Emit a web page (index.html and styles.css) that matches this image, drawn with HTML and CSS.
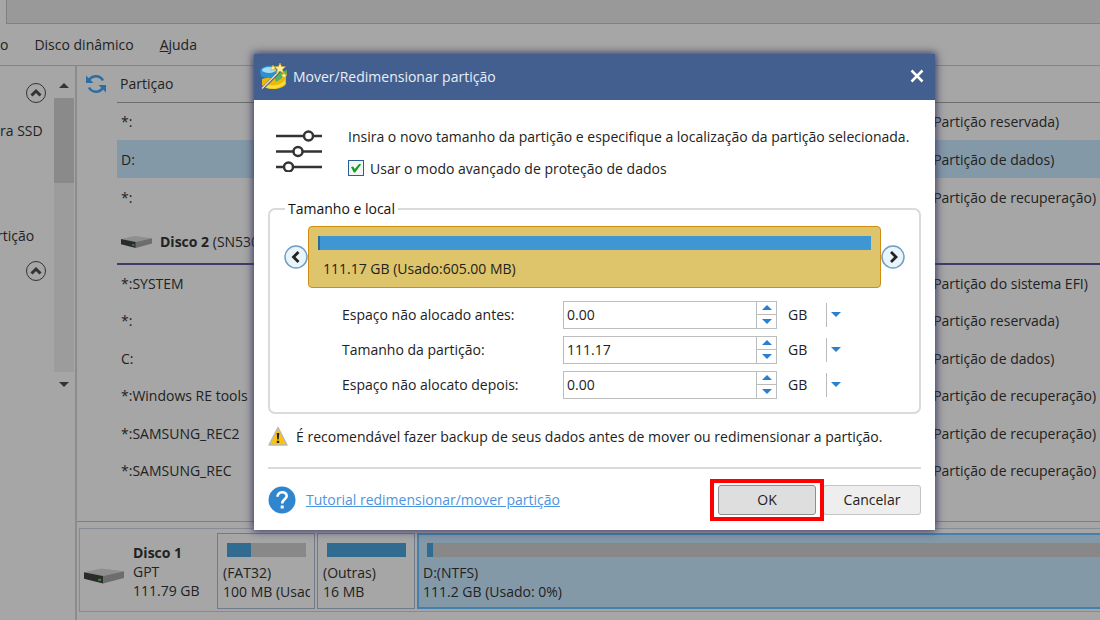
FILE: index.html
```html
<!DOCTYPE html>
<html lang="pt">
<head>
<meta charset="utf-8">
<title>Mover/Redimensionar partição</title>
<link rel="stylesheet" href="styles.css">
</head>
<body>
<div class="app">
  <div class="tabstrip"></div>
  <nav class="menubar">
    <span>o</span>
    <span>Disco dinâmico</span>
    <span><u>A</u>juda</span>
  </nav>
  <div class="workspace">
    <aside class="sidebar">
      <div class="actions">
        <button class="collapse" aria-label="Recolher"><svg viewBox="0 0 22 22"><circle cx="11" cy="11" r="9.5"/><path d="M6.5 13.5 11 9l4.5 4.5"/></svg></button>
        <p class="action first">ra SSD</p>
        <p class="action second">rtição</p>
        <button class="collapse" aria-label="Recolher"><svg viewBox="0 0 22 22"><circle cx="11" cy="11" r="9.5"/><path d="M6.5 13.5 11 9l4.5 4.5"/></svg></button>
      </div>
      <div class="scrollbar">
        <svg class="scroll-arrow" viewBox="0 0 10 5"><path d="M0 5 5 0l5 5z"/></svg>
        <div class="track"><div class="thumb"></div></div>
        <svg class="scroll-arrow" viewBox="0 0 10 5"><path d="M0 0h10L5 5z"/></svg>
      </div>
    </aside>
    <main class="content">
      <div class="listing">
        <button class="refresh" aria-label="Atualizar"><svg viewBox="0 0 20 20"><path class="arc" d="M2.5 7.5A8 8 0 0 1 17 6.5M17.500 12.500A8 8 0 0 1 3 13.500"/><path class="tip" d="M0 1.500V9h7.500zM20 18.500V11h-7.500z"/></svg></button>
        <table class="partitions">
          <thead><tr><th class="name" scope="col">Partiçao</th><td></td></tr></thead>
          <tbody class="group">
            <tr><td>*:</td><td>(Partição reservada)</td></tr>
            <tr class="selected"><td>D:</td><td>(Partição de dados)</td></tr>
            <tr><td>*:</td><td>(Partição de recuperação)</td></tr>
          </tbody>
          <tbody class="disk">
            <tr><td colspan="2"><div class="disk-title"><svg viewBox="0 0 42 16"><path fill="#8f8f8f" d="M0 4 18 0l24 3-22 5z"/><path fill="#2b2b2b" d="M0 4l20 4v8L0 11z"/><path fill="#6d6d6d" d="M20 8l22-5v7l-22 6z"/><path fill="#2e9a3c" d="M15 11h3v2h-3z"/></svg><span><b>Disco 2</b> (SN530</span></div></td></tr>
          </tbody>
          <tbody class="group volumes">
            <tr><td>*:SYSTEM</td><td>(Partição do sistema EFI)</td></tr>
            <tr><td>*:</td><td>(Partição reservada)</td></tr>
            <tr><td>C:</td><td>(Partição de dados)</td></tr>
            <tr><td>*:Windows RE tools</td><td>(Partição de recuperação)</td></tr>
            <tr><td>*:SAMSUNG_REC2</td><td>(Partição de recuperação)</td></tr>
            <tr><td>*:SAMSUNG_REC</td><td>(Partição de recuperação)</td></tr>
          </tbody>
        </table>
      </div>
      <section class="diskmap">
        <div class="disk-card">
          <div class="disk-info">
            <svg viewBox="0 0 42 16"><path fill="#8f8f8f" d="M0 4 18 0l24 3-22 5z"/><path fill="#2b2b2b" d="M0 4l20 4v8L0 11z"/><path fill="#6d6d6d" d="M20 8l22-5v7l-22 6z"/><path fill="#2e9a3c" d="M15 11h3v2h-3z"/></svg>
            <div><b>Disco 1</b><br>GPT<br>111.79 GB</div>
          </div>
          <div class="part">
            <div class="usage"><div class="used" style="width:30%"></div></div>
            <p>(FAT32)<br>100 MB (Usado)</p>
          </div>
          <div class="part">
            <div class="usage"><div class="used" style="width:100%"></div></div>
            <p>(Outras)<br>16 MB</p>
          </div>
          <div class="part large">
            <div class="usage"><div class="used" style="width:6px"></div></div>
            <p>D:(NTFS)<br>111.2 GB (Usado: 0%)</p>
          </div>
        </div>
      </section>
    </main>
  </div>
</div>

<div class="dialog" role="dialog" aria-labelledby="dlg-title">
  <header class="titlebar">
    <svg class="logo" viewBox="0 0 28 28">
      <path fill="#e9b90c" d="M2 16v6c3 5 20 6 24-1V9L13 13z"/>
      <path fill="#f8dd3c" d="M5 20c5 4 16 3 20-3v4c-5 5-15 6-20 3z"/>
      <path fill="#2a93cf" d="M0 8c0-3 6-6 14-5l4 3-5 9C6 15 1 14 1 13z"/>
      <ellipse cx="9" cy="7" rx="7" ry="3" fill="#a5dcf5"/>
      <path fill="#53b35a" d="M14 12 27 7v5l-11 7z"/>
      <path d="M2 26 19 9" stroke="#5d6166" stroke-width="2.800"/>
      <path d="M2 25.500 18.500 9" stroke="#e3e7ea" stroke-width="1.200"/>
      <path fill="#fff09a" stroke="#d9a514" stroke-width=".6" d="m20 0 1.500 3.500 4 .2-3 2.600 1 4-3.500-2.200-3.500 2.200 1-4-3-2.600 4-.2zM13 2l1 2 2 .2-1.500 1.300.5 2-2-1-2 1 .5-2L10 4.200l2-.2zM24 9.500l1 2 2 .2-1.500 1.300.5 2-2-1-2 1 .5-2-1.500-1.300 2-.2z"/>
    </svg>
    <h1 id="dlg-title">Mover/Redimensionar partição</h1>
    <button class="close" aria-label="Fechar"><svg viewBox="0 0 14 14"><path d="m1.500 1.500 11 11m0-11-11 11"/></svg></button>
  </header>
  <div class="dialog-body">
    <div class="intro">
      <svg class="sliders" viewBox="0 0 48 44"><path d="M1 8h46M1 23.500h46M1 39h46"/><circle cx="33.500" cy="8" r="4.500"/><circle cx="23" cy="23.500" r="4.500"/><circle cx="13.500" cy="39" r="4.500"/></svg>
      <div>
        <p class="line">Insira o novo tamanho da partição e especifique a localização da partição selecionada.</p>
        <label class="line"><input class="check" type="checkbox" checked>Usar o modo avançado de proteção de dados</label>
      </div>
    </div>
    <fieldset class="sizes">
      <legend>Tamanho e local</legend>
      <div class="resizer">
        <button class="handle" aria-label="Esquerda"><svg viewBox="0 0 24 24"><circle cx="12" cy="12" r="11"/><path d="m14.500 7-5 5 5 5"/></svg></button>
        <div class="slab">
          <div class="slab-bar"></div>
          <p>111.17 GB (Usado:605.00 MB)</p>
        </div>
        <button class="handle" aria-label="Direita"><svg viewBox="0 0 24 24"><circle cx="12" cy="12" r="11"/><path d="m10 7 5 5-5 5"/></svg></button>
      </div>
      <div class="field">
        <label for="before">Espaço não alocado antes:</label>
        <div class="spin"><input id="before" type="text" value="0.00"><div class="steps"><button aria-label="Mais"><svg viewBox="0 0 10 5"><path d="M0 5 5 0l5 5z"/></svg></button><button aria-label="Menos"><svg viewBox="0 0 10 5"><path d="M0 0h10L5 5z"/></svg></button></div></div>
        <div class="unit"><select aria-label="Unidade antes"><option>GB</option></select><svg viewBox="0 0 10 5"><path d="M0 0h10L5 5z"/></svg></div>
      </div>
      <div class="field">
        <label for="size">Tamanho da partição:</label>
        <div class="spin"><input id="size" type="text" value="111.17"><div class="steps"><button aria-label="Mais"><svg viewBox="0 0 10 5"><path d="M0 5 5 0l5 5z"/></svg></button><button aria-label="Menos"><svg viewBox="0 0 10 5"><path d="M0 0h10L5 5z"/></svg></button></div></div>
        <div class="unit"><select aria-label="Unidade tamanho"><option>GB</option></select><svg viewBox="0 0 10 5"><path d="M0 0h10L5 5z"/></svg></div>
      </div>
      <div class="field">
        <label for="after">Espaço não alocato depois:</label>
        <div class="spin"><input id="after" type="text" value="0.00"><div class="steps"><button aria-label="Mais"><svg viewBox="0 0 10 5"><path d="M0 5 5 0l5 5z"/></svg></button><button aria-label="Menos"><svg viewBox="0 0 10 5"><path d="M0 0h10L5 5z"/></svg></button></div></div>
        <div class="unit"><select aria-label="Unidade depois"><option>GB</option></select><svg viewBox="0 0 10 5"><path d="M0 0h10L5 5z"/></svg></div>
      </div>
    </fieldset>
    <div class="warning">
      <svg viewBox="0 0 20 20"><path fill="#fdc20f" stroke="#b9b9b9" stroke-width="1.500" stroke-linejoin="round" d="M10 1.500 19 19H1z"/><path fill="#222" d="M8.700 7h2.600l-.6 6.500H9.300zM8.800 14.800h2.400V17H8.800z"/></svg>
      <p>É recomendável fazer backup de seus dados antes de mover ou redimensionar a partição.</p>
    </div>
    <footer class="footer">
      <svg class="help" viewBox="0 0 28 28"><circle cx="14" cy="14" r="13.500" fill="#2f86cf"/><path fill="none" stroke="#fff" stroke-width="2.600" d="M9.500 10.800c0-6 9.200-6 9.200-.8 0 3.300-4.500 3.400-4.500 7.500"/><path fill="#fff" d="M12.700 19.500h3v3h-3z"/></svg>
      <a href="#">Tutorial redimensionar/mover partição</a>
      <div class="buttons">
        <div class="ok-wrap"><button class="btn primary">OK</button><div class="highlight"></div></div>
        <button class="btn">Cancelar</button>
      </div>
    </footer>
  </div>
</div>
</body>
</html>
```

FILE: styles.css
```css
* { box-sizing: border-box; }

body {
  margin: 0;
  font: 14px/19px "Open Sans", "Noto Sans", sans-serif;
  color: #222;
  background: #a6a6a6;
  overflow: hidden;
}

p, h1 { margin: 0; font-size: inherit; font-weight: normal; }
button, input, select { font: inherit; color: inherit; margin: 0; padding: 0; }
button { border: 0; background: none; }
svg { display: block; flex: none; }

.app { height: 100vh; display: flex; flex-direction: column; white-space: nowrap; }
.tabstrip { height: 24px; margin-left: 6px; background: #999; border-left: 1px solid #808080; border-bottom: 1px solid #808080; }
.menubar { height: 42px; display: flex; align-items: center; gap: 26px; border-bottom: 1px solid #858585; }

.workspace { flex: 1; display: flex; min-height: 0; }
.sidebar { width: 77px; flex: none; display: flex; border-right: 2px solid #8c8c8c; }
.actions { width: 54px; padding-top: 16px; display: flex; flex-direction: column; overflow: hidden; }
.collapse { align-self: flex-end; margin-right: 7px; }
.collapse svg { width: 22px; height: 22px; fill: none; stroke: #333; stroke-width: 1; }
.collapse path { stroke-width: 3; }
.action.first { margin: 17px 0 86px; }
.action.second { margin: 0 0 15px -3px; }
.scrollbar { width: 20px; padding-top: 17px; display: flex; flex-direction: column; align-items: center; gap: 10px; }
.scroll-arrow { width: 10px; height: 5px; fill: #333; }
.track { width: 20px; height: 274px; background: #9c9c9c; }
.thumb { height: 85px; background: #8a8a8a; }

.content { flex: 1; min-width: 0; display: flex; flex-direction: column; }
.listing { display: flex; align-items: flex-start; gap: 11px; padding-left: 9px; }
.refresh { padding-top: 8px; }
.refresh svg { width: 20px; height: 20px; }
.refresh .arc { fill: none; stroke: #2c6ea3; stroke-width: 2.5; }
.refresh .tip { fill: #2c6ea3; }

.partitions { flex: 1; table-layout: fixed; border-collapse: collapse; }
.partitions th, .partitions td { padding: 0 0 0 4px; text-align: left; font-weight: normal; }
.partitions .name { width: 808px; padding-left: 3px; }
.partitions thead tr { height: 36px; border-bottom: 1px solid #6e6e6e; }
.group tr { height: 38px; }
.volumes tr:nth-child(even) { height: 37px; }
.group .selected { background: #8499a7; }
.disk tr { height: 48px; border-bottom: 2px solid #3d3d66; }
.disk-title { display: flex; align-items: center; gap: 8px; padding-top: 4px; }
.disk-title svg { width: 31px; height: 14px; }

.diskmap { margin-top: auto; border-top: 1px solid #7f7f7f; padding: 6px 0 8px 2px; }
.disk-card { display: flex; gap: 2px; border: 1px solid #868b93; border-right: 0; padding: 4px 0 2px; }
.disk-info { width: 135px; display: flex; align-items: center; gap: 9px; padding-left: 4px; }
.disk-info svg { width: 40px; height: 16px; margin-top: 10px; }
.part { width: 98px; height: 76px; padding: 9px 4px 0 5px; border: 1px solid #707a88; }
.part p { margin-top: 6px; overflow: hidden; }
.usage { height: 14px; margin: 0 4px; background: #888; }
.used { height: 14px; background: #316b90; }
.part.large { flex: 1; border: 2px solid #4480ae; border-right: 0; padding: 8px 0 0 4px; background: #8499a7; }
.part.large .usage { margin-right: 0; }

.dialog { position: absolute; top: 54px; left: 254px; right: 165px; background: #fff; box-shadow: 0 0 8px 1px #33335f; }
.titlebar { height: 46px; display: flex; align-items: center; gap: 5px; padding: 0 11px 0 6px; background: #435f8f; color: #e9eef6; }
.titlebar h1 { flex: 1; padding-bottom: 2px; }
.logo { width: 28px; height: 28px; }
.close { padding-bottom: 2px; }
.close svg { width: 14px; height: 14px; fill: none; stroke: #fff; stroke-width: 2.5; }
.dialog-body { padding: 20px 14px 0; }

.intro { display: flex; gap: 25px; padding-left: 7px; white-space: nowrap; }
.sliders { width: 48px; height: 44px; margin-top: 8px; fill: #fff; stroke: #333; stroke-width: 2.5; }
.line { height: 32px; display: flex; align-items: center; gap: 6px; }
.check { appearance: none; width: 16px; height: 16px; border: 1px solid #2b5f95; display: grid; place-items: center; background: #f2f5f7; }
.check::before { content: ""; width: 10px; height: 9px; background: #14a01c; clip-path: polygon(0 40%, 22% 34%, 38% 60%, 85% 0, 100% 12%, 42% 100%, 28% 100%); }

.sizes { margin: 15px 0 0; padding: 7px 14px 10px; min-width: 0; border: 2px solid #dadada; border-radius: 7px; }
.sizes legend { margin-left: 1px; padding: 0 3px; height: 20px; color: #111; }
.resizer { display: flex; align-items: center; margin-bottom: 9px; }
.handle svg { width: 24px; height: 24px; fill: #eaf4fb; stroke: #6f9fc4; stroke-width: 1.5; }
.handle path { fill: none; stroke: #222; stroke-width: 2.8; }
.slab { flex: 1; height: 62px; padding: 9px; border: 1px solid #d08c10; border-radius: 4px; background: #dec56b; }
.slab-bar { height: 14px; background: #3e97d3; border-left: 2px solid #2c6b95; }
.slab p { margin: 9px 0 0 5px; }

.field { height: 35px; display: flex; align-items: center; padding-left: 58px; }
.field label { width: 221px; }
.spin { width: 214px; height: 28px; display: flex; border: 1px solid #bdbdbd; }
.spin input { flex: 1; min-width: 0; border: 0; padding-left: 3px; background: #fff; }
.steps { width: 20px; display: flex; flex-direction: column; border-left: 1px solid #bdbdbd; }
.steps button { flex: 1; display: grid; place-items: center; }
.steps button + button { border-top: 1px solid #bdbdbd; }
.steps svg, .unit svg { width: 10px; height: 5px; fill: #2a80cc; }
.unit { margin-left: 11px; display: grid; grid-template-columns: 38px 20px; align-items: center; height: 24px; }
.unit select { grid-area: 1 / 1 / 2 / 3; width: 100%; appearance: none; border: 0; background: none; }
.unit svg { grid-area: 1 / 2 / 2 / 3; box-sizing: content-box; padding: 9px 5px 10px 4px; border-left: 1px solid #bbb; pointer-events: none; }

.warning { display: flex; align-items: center; gap: 8px; height: 44px; margin-bottom: 9px; white-space: nowrap; }
.warning svg { width: 20px; height: 20px; }
.footer { display: flex; align-items: center; height: 63px; border-top: 2px solid #dadada; }
.help { width: 28px; height: 28px; margin-right: 10px; }
.footer a { color: #4d94e0; }
.buttons { margin-left: auto; display: flex; gap: 7px; }
.btn { width: 98px; height: 30px; border: 1px solid #c4c4c4; border-radius: 3px; background: #eee; }
.btn.primary { border: 1px solid #8f8f8f; background: #dedede; }
.ok-wrap { position: relative; display: flex; }
.highlight { position: absolute; inset: -6px -8px; border: 4px solid #f00; pointer-events: none; }
```
